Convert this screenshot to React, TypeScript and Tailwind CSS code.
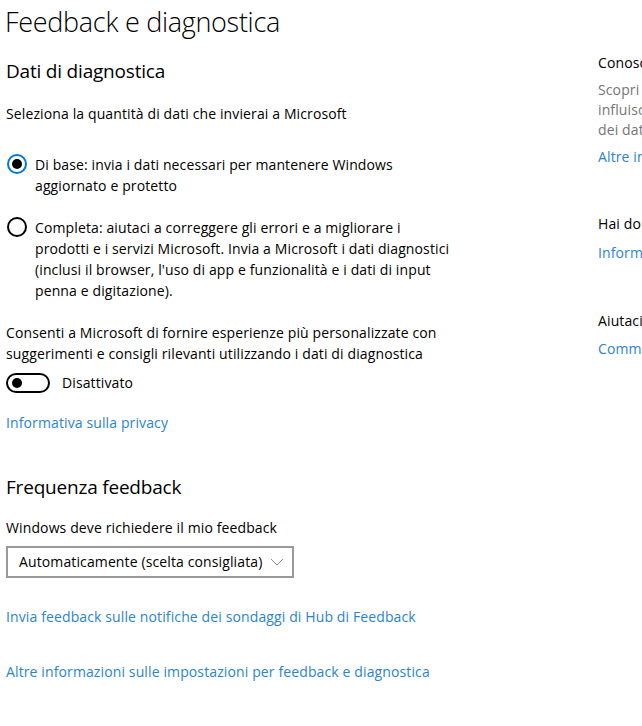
import React from "react";

const font = { fontFamily: '"Open Sans", "Noto Sans", sans-serif' };

function Radio({ checked }: { checked: boolean }) {
  return checked ? (
    <div className="w-[20px] h-[20px] rounded-full border-2 border-[#0078d7] flex items-center justify-center shrink-0">
      <div className="w-[10px] h-[10px] rounded-full bg-black" />
    </div>
  ) : (
    <div className="w-[20px] h-[20px] rounded-full border-2 border-black shrink-0" />
  );
}

export default function App() {
  return (
    <div
      className="w-[642px] h-[726px] overflow-hidden bg-white text-black flex tracking-[0.12px]"
      style={font}
    >
      <div className="w-[592px] shrink-0 pl-[6px] flex flex-col">
        <h1 className="text-[27px] leading-[36px] font-light mt-[4px] -ml-[1px] tracking-[-0.3px]">
          Feedback e diagnostica
        </h1>
        <h2 className="text-[19px] leading-[28px] mt-[17px] tracking-[-0.2px]">Dati di diagnostica</h2>
        <p className="text-[14px] leading-[20px] mt-[19px]">
          Seleziona la quantità di dati che invierai a Microsoft
        </p>

        <div className="flex gap-[8px] mt-[30px] ml-[1px]">
          <div>
            <Radio checked />
          </div>
          <p className="text-[14px] leading-[21px] w-[400px] -mt-[0.5px]">
            Di base: invia i dati necessari per mantenere Windows aggiornato e protetto
          </p>
        </div>

        <div className="flex gap-[8px] mt-[21px] ml-[1px]">
          <div>
            <Radio checked={false} />
          </div>
          <p className="text-[14px] leading-[21px] w-[422px]">
            Completa: aiutaci a correggere gli errori e a migliorare i prodotti e i
            servizi Microsoft. Invia a Microsoft i dati diagnostici (inclusi il
            browser, l'uso di app e funzionalità e i dati di input penna e
            digitazione).
          </p>
        </div>

        <p className="text-[14px] leading-[21px] mt-[21px] w-[440px]">
          Consenti a Microsoft di fornire esperienze più personalizzate con
          suggerimenti e consigli rilevanti utilizzando i dati di diagnostica
        </p>

        <div className="flex items-center gap-[12px] mt-[9px]">
          <div className="w-[44px] h-[20px] rounded-full border-2 border-black flex items-center pl-[4px]">
            <div className="w-[10px] h-[10px] rounded-full bg-black" />
          </div>
          <span className="text-[14px] leading-[20px]">Disattivato</span>
        </div>

        <a className="text-[14px] leading-[20px] text-[#2a84d2] mt-[20px]">
          Informativa sulla privacy
        </a>

        <h2 className="text-[19px] leading-[28px] mt-[40px] tracking-[-0.2px]">Frequenza feedback</h2>
        <p className="text-[14px] leading-[20px] mt-[17px]">
          Windows deve richiedere il mio feedback
        </p>
        <div className="mt-[8px] w-[288px] h-[32px] border-2 border-[#999999] flex items-center justify-between pl-[11px] pr-[8px]">
          <span className="text-[14px] leading-[20px]">
            Automaticamente (scelta consigliata)
          </span>
          <svg width="14" height="8" viewBox="0 0 14 8" fill="none">
            <path d="M1 1 L7 7 L13 1" stroke="#8a8a8a" strokeWidth="1" />
          </svg>
        </div>

        <a className="text-[14px] leading-[20px] text-[#2a84d2] mt-[29px]">
          Invia feedback sulle notifiche dei sondaggi di Hub di Feedback
        </a>
        <a className="text-[14px] leading-[20px] text-[#2a84d2] mt-[35px]">
          Altre informazioni sulle impostazioni per feedback e diagnostica
        </a>
      </div>

      <div className="pl-[6px] w-[260px] shrink-0 flex flex-col text-[14px] leading-[20px]">
        <p className="mt-[53px] whitespace-nowrap">Conosci le tue opzioni di privacy</p>
        <p className="mt-[7px] text-[#767676] whitespace-nowrap">
          Scopri in che modo queste impostazioni
          <br />
          influiscono sulla tua privacy e sull'uso
          <br />
          dei dati.
        </p>
        <a className="mt-[7px] text-[#2a84d2] whitespace-nowrap">Altre informazioni</a>
        <p className="mt-[47px] whitespace-nowrap">Hai domande?</p>
        <a className="mt-[9px] text-[#2a84d2] whitespace-nowrap">Informazioni di supporto</a>
        <p className="mt-[48px] whitespace-nowrap">Aiutaci a migliorare Windows</p>
        <a className="mt-[8px] text-[#2a84d2] whitespace-nowrap">Commenti e suggerimenti</a>
      </div>
    </div>
  );
}
